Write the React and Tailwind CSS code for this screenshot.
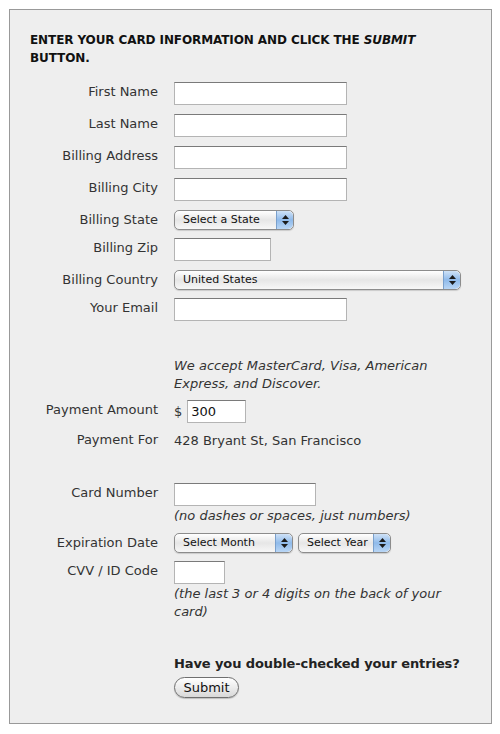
const font = { fontFamily: '"DejaVu Sans", Verdana, sans-serif' };

function TextBox({ width, value }) {
  return (
    <div
      className={`h-[23px] bg-white border border-[#b4b4b4] border-t-[#7a7a7a] px-[3px] text-[13px] leading-[21px] text-[#111] ${width}`}
    >
      {value}
    </div>
  );
}

function Stepper() {
  return (
    <div className="flex w-[17px] flex-col items-center justify-center gap-[2px] self-stretch rounded-r-[5px] border-l border-[#7aa0cc] bg-gradient-to-b from-[#cfe2f7] via-[#8fbaea] to-[#b9d6f5]">
      <svg width="7" height="4" viewBox="0 0 7 4">
        <path d="M3.5 0 L7 4 L0 4 Z" fill="#1b1b1b" />
      </svg>
      <svg width="7" height="4" viewBox="0 0 7 4">
        <path d="M0 0 L7 0 L3.5 4 Z" fill="#1b1b1b" />
      </svg>
    </div>
  );
}

function Select({ width, label }) {
  return (
    <div
      className={`flex h-[20px] items-stretch overflow-hidden rounded-[5px] border border-[#8c8c8c] bg-gradient-to-b from-white via-[#e6e6e6] to-[#f7f7f7] shadow-[0_1px_1px_rgba(0,0,0,0.15)] ${width}`}
    >
      <div className="flex-1 pl-[8px] text-[11px] leading-[18px] text-[#111]">{label}</div>
      <Stepper />
    </div>
  );
}

function Row({ label, children, className = "" }) {
  return (
    <div className={`flex items-start ${className}`}>
      <div className="w-[128px] shrink-0 pt-[1px] text-right leading-[18px] text-[#333]">{label}</div>
      <div className="ml-4 flex flex-col">{children}</div>
    </div>
  );
}

export default function App() {
  return (
    <div className="min-h-screen bg-white p-[9px]" style={font}>
      <div className="w-[483px] h-[715px] border border-[#999] bg-[#eeeeee] pl-[20px] pt-[21px] text-[13px]">
        <h1 className="text-[12px] font-bold leading-[18px] tracking-[-0.1px] text-[#111] uppercase pr-4">
          Enter your card information and click the <i>Submit</i> button.
        </h1>

        <div className="mt-[15px] flex flex-col">
          <Row label="First Name"><TextBox width="w-[173px]" /></Row>
          <Row label="Last Name" className="mt-[9px]"><TextBox width="w-[173px]" /></Row>
          <Row label="Billing Address" className="mt-[9px]"><TextBox width="w-[173px]" /></Row>
          <Row label="Billing City" className="mt-[9px]"><TextBox width="w-[173px]" /></Row>
          <Row label="Billing State" className="mt-[9px]">
            <Select width="w-[120px]" label="Select a State" />
          </Row>
          <Row label="Billing Zip" className="mt-[8px]"><TextBox width="w-[97px]" /></Row>
          <Row label="Billing Country" className="mt-[9px]">
            <Select width="w-[287px]" label="United States" />
          </Row>
          <Row label="Your Email" className="mt-[8px]"><TextBox width="w-[173px]" /></Row>

          <Row label="" className="mt-[36px]">
            <p className="w-[270px] italic leading-[18px] text-[#333]">
              We accept MasterCard, Visa, American Express, and Discover.
            </p>
          </Row>

          <Row label="Payment Amount" className="mt-[7px]">
            <div className="flex items-center">
              <span className="mr-[5px] text-[#333]">$</span>
              <TextBox width="w-[59px]" value="300" />
            </div>
          </Row>
          <Row label="Payment For" className="mt-[7px]">
            <div className="leading-[20px] text-[#333] pt-[1px]">428 Bryant St, San Francisco</div>
          </Row>

          <Row label="Card Number" className="mt-[32px]">
            <TextBox width="w-[142px]" />
            <p className="italic leading-[18px] text-[#333] mt-[1px]">(no dashes or spaces, just numbers)</p>
          </Row>
          <Row label="Expiration Date" className="mt-[8px]">
            <div className="flex gap-[5px]">
              <Select width="w-[119px]" label="Select Month" />
              <Select width="w-[93px]" label="Select Year" />
            </div>
          </Row>
          <Row label="CVV / ID Code" className="mt-[8px]">
            <TextBox width="w-[51px]" />
            <p className="w-[280px] italic leading-[18px] text-[#333] mt-[1px]">
              (the last 3 or 4 digits on the back of your card)
            </p>
          </Row>

          <Row label="" className="mt-[34px]">
            <p className="font-bold leading-[18px] tracking-[-0.1px] text-[#222]">Have you double-checked your entries?</p>
            <button className="mt-[4px] h-[21px] w-[65px] rounded-full border border-[#6f6f6f] bg-gradient-to-b from-white via-[#ececec] to-[#d8d8d8] text-[13px] leading-[19px] text-[#111] shadow-[0_1px_1px_rgba(0,0,0,0.2)]">
              Submit
            </button>
          </Row>
        </div>
      </div>
    </div>
  );
}
